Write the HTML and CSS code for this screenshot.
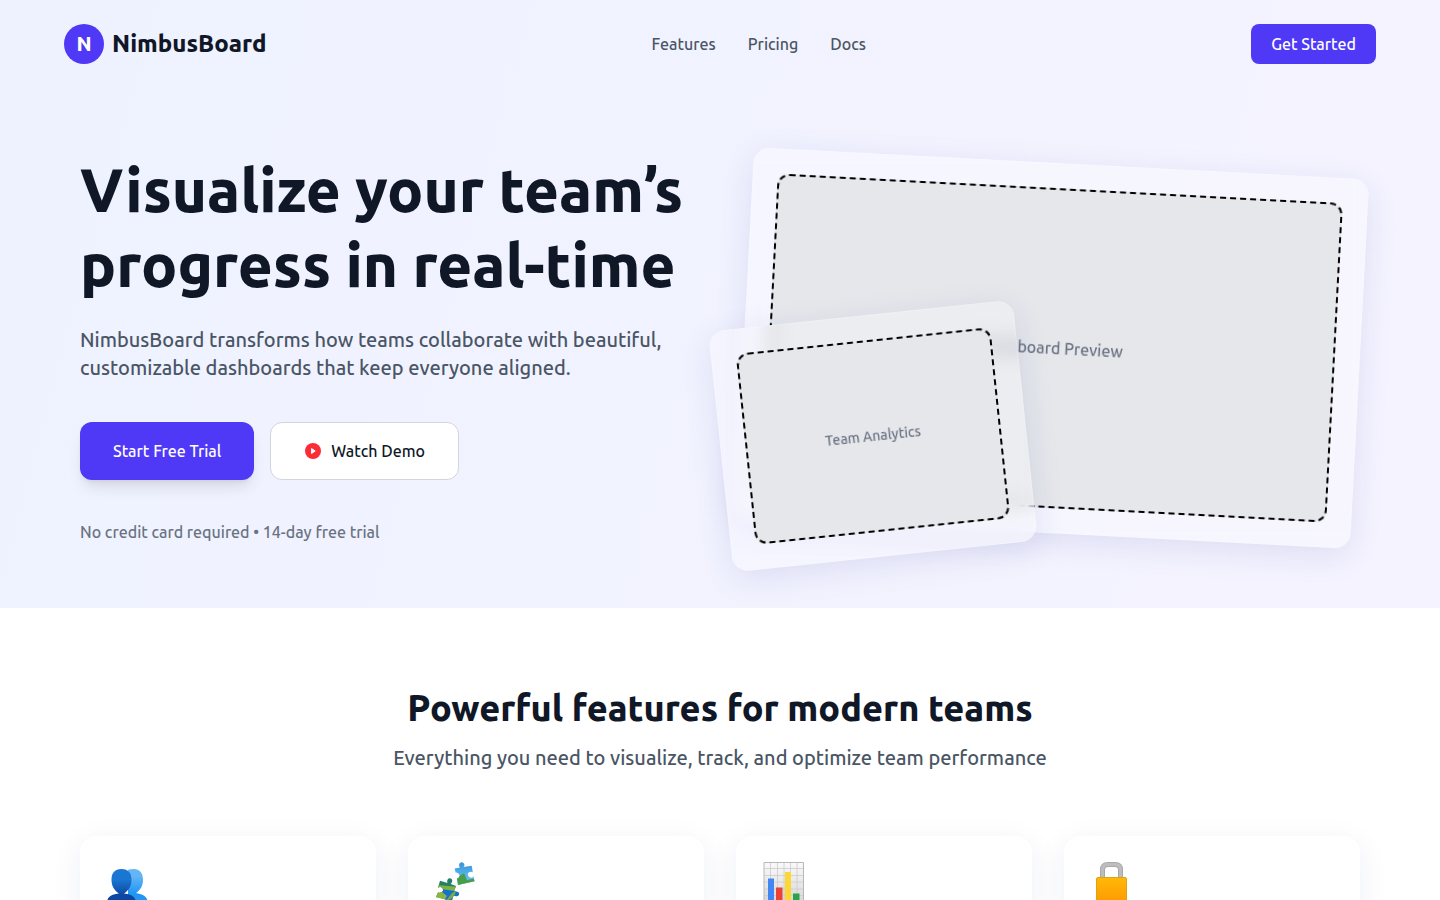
FILE: index.html
```html
<!DOCTYPE html>
<html lang="en">
<head>
<meta charset="utf-8">
<meta name="viewport" content="width=device-width, initial-scale=1">
<title>NimbusBoard</title>
<link rel="stylesheet" href="styles.css">
</head>
<body>
<div class="hero-wrap">
  <header class="topbar">
    <a class="brand" href="#"><span class="brand-mark">N</span><span class="brand-name">NimbusBoard</span></a>
    <nav class="nav">
      <a href="#features">Features</a>
      <a href="#">Pricing</a>
      <a href="#">Docs</a>
    </nav>
    <button class="btn btn-small" type="button">Get Started</button>
  </header>
  <section class="hero">
    <div class="hero-copy">
      <h1>Visualize your team’s progress in real-time</h1>
      <p class="lead">NimbusBoard transforms how teams collaborate with beautiful, customizable dashboards that keep everyone aligned.</p>
      <div class="actions">
        <button class="btn btn-large" type="button">Start Free Trial</button>
        <button class="btn-outline" type="button">
          <svg class="play" viewBox="0 0 16 16" aria-hidden="true"><circle cx="8" cy="8" r="8" fill="#fb2c36"/><path d="M6.6 5.6 10.2 8 6.6 10.4Z" fill="#fff" stroke="#fff" stroke-width="1" stroke-linejoin="round"/></svg>
          Watch Demo
        </button>
      </div>
      <p class="note">No credit card required • 14-day free trial</p>
    </div>
    <div class="previews">
      <div class="glass glass-main"><div class="placeholder placeholder-main">Dashboard Preview</div></div>
      <div class="glass glass-side"><div class="placeholder placeholder-side">Team Analytics</div></div>
    </div>
  </section>
</div>
<section class="features" id="features">
  <h2>Powerful features for modern teams</h2>
  <p class="features-lead">Everything you need to visualize, track, and optimize team performance</p>
  <div class="cards">
    <article class="card">
      <svg class="icon" viewBox="0 0 48 48" role="img" aria-label="People">
        <defs>
          <linearGradient id="dark" x1="0" y1="9" x2="0" y2="44" gradientUnits="userSpaceOnUse"><stop offset=".3" stop-color="#1976d2"/><stop offset=".75" stop-color="#0d47a1"/></linearGradient>
          <linearGradient id="light" x1="0" y1="9" x2="0" y2="44" gradientUnits="userSpaceOnUse"><stop offset=".2" stop-color="#64b5f6"/><stop offset=".7" stop-color="#2196f3"/></linearGradient>
        </defs>
        <path d="M29.500 9C36 9 39 13 39 20C39 27 35 31 32 33C41 34.500 44 38 44 44H24V9.800Q27 9 29.500 9Z" fill="url(#light)"/>
        <path d="M17.500 9C24.500 9 27.500 13 27.500 20C27.500 26.500 24 31 20 33.500C30 34.500 32 38 32 44H3C3 38 5 34.500 15 33.500C11 31 7.500 26.500 7.500 20C7.500 13 10.500 9 17.500 9Z" fill="url(#dark)"/>
      </svg>
    </article>
    <article class="card">
      <svg class="icon" viewBox="0 0 48 48" role="img" aria-label="Puzzle">
        <defs>
          <linearGradient id="sky" x1="0" y1="4" x2="0" y2="20" gradientUnits="userSpaceOnUse"><stop offset="0" stop-color="#3997db"/><stop offset="1" stop-color="#64c2f7"/></linearGradient>
          <clipPath id="upper"><path d="M22.700 8.500 28 7.600Q26 5 28 3Q30 1.500 31.700 3.200Q33.300 5 31.500 7L39.700 5.700 40.800 12.300Q37.500 10.500 35.800 13.500Q35.500 17 38.500 17.500Q40.500 18 41.500 16.500L42.500 21.300 26 25 25 18.500Q27.500 18 27.500 15Q26 12 23.600 12.600Z"/></clipPath>
          <clipPath id="lower"><path d="M8 20.700 15.500 23Q14.500 20 16.500 18.500Q19.500 17.500 20.200 20Q20.500 22.500 18.700 24L24 26 22 31.500Q27 31 27.200 34Q26 37.500 21.500 35.500L19.700 41 4 37 6 32.500Q9.500 33.500 11 31Q11.500 27.500 8.500 27Q6.500 27 6 28Z"/></clipPath>
        </defs>
        <g clip-path="url(#upper)"><path d="M20 0H45V27H20Z" fill="url(#sky)"/><path d="M23 19 32 13 35 20 44 18V27H23Z" fill="#4a9e49"/></g>
        <g clip-path="url(#lower)"><path d="M0 16H30V44H0Z" fill="#237f68"/><path d="M4 25 28 27 20 34 2 33Z" fill="#80b342"/><path d="M9 29 23 31 30 31V44H14Z" fill="#1571cd"/><path d="M3 33 10 32 15 36 11 42H3Z" fill="#8cb442"/><path d="M20 33 24 31 22 37 13 42Z" fill="#79ac3d"/></g>
      </svg>
    </article>
    <article class="card">
      <svg class="icon" viewBox="0 0 48 48" role="img" aria-label="Chart">
        <defs><linearGradient id="sheet" x1="0" y1="2" x2="0" y2="45" gradientUnits="userSpaceOnUse"><stop offset="0" stop-color="#fafafa"/><stop offset="1" stop-color="#d5d5d5"/></linearGradient></defs>
        <path d="M4 2.500H43.500V45H4Z" fill="url(#sheet)" stroke="#b8b8b8"/>
        <path d="M10.500 3V45M17.500 3V45M24 3V45M30.500 3V45M37 3V45M4 8.500H43M4 15.500H43M4 22H43M4 29H43M4 35.500H43" stroke="#cbcbcb" stroke-width=".8"/>
        <path d="M8 18.500H14V44H8Z" fill="#4285f4"/><path d="M16 27.500H22.500V44H16Z" fill="#ea4335"/>
        <path d="M25 12H31V44H25Z" fill="#fdd835"/><path d="M33 33.500H39.500V44H33Z" fill="#29a34c"/>
      </svg>
    </article>
    <article class="card">
      <svg class="icon" viewBox="0 0 48 48" role="img" aria-label="Lock">
        <defs><linearGradient id="gold" x1="0" y1="17" x2="0" y2="46" gradientUnits="userSpaceOnUse"><stop offset="0" stop-color="#ffb908"/><stop offset="1" stop-color="#ff9500"/></linearGradient></defs>
        <path d="M14.500 20V10Q14.500 4.500 20 4.500H27Q32.500 4.500 32.500 10V20" fill="none" stroke="#a3a3a3" stroke-width="5"/>
        <path d="M14.500 20V10Q14.500 4.500 20 4.500H27Q32.500 4.500 32.500 10V20" fill="none" stroke="#bdbdbd" stroke-width="3.400"/>
        <rect x="8.500" y="17.500" width="30" height="28" rx="1.500" fill="url(#gold)" stroke="#d9a514"/>
      </svg>
    </article>
  </div>
</section>
</body>
</html>
```
FILE: styles.css
```css
* { box-sizing: border-box; }
body {
  margin: 0;
  background: #fff;
  color: #101828;
  font-family: Ubuntu, "Noto Sans", sans-serif;
  font-size: 16px;
  font-weight: 500;
  line-height: 24px;
}
h1, h2, p { margin: 0; }
a { color: inherit; text-decoration: none; }
button { font: inherit; cursor: pointer; }
h1, h2, .brand-mark, .brand-name { font-weight: 800; }
.hero-wrap { background: linear-gradient(105deg, #eef2ff, #f5f3ff); overflow: hidden; }
.topbar { display: flex; align-items: center; justify-content: space-between; padding: 24px 64px; }
.brand { display: flex; align-items: center; gap: 8px; }
.brand-mark {
  display: grid; place-items: center; width: 40px; height: 40px; border-radius: 50%;
  background: #4f39f6; color: #fff; font-size: 20px;
}
.brand-name { font-size: 24px; line-height: 32px; }
.nav { display: flex; gap: 32px; color: #4a5565; }
.btn { border: 0; background: #4f39f6; color: #fff; }
.btn-small { padding: 8px 20px; border-radius: 8px; }
.btn-large {
  padding: 17px 33px; border-radius: 12px;
  box-shadow: 0 10px 15px -3px rgba(0, 0, 0, 0.1), 0 4px 6px -4px rgba(0, 0, 0, 0.1);
}
.btn-outline {
  display: flex; align-items: center; gap: 10px; padding: 16px 33px 16px 34px;
  border: 1px solid #d1d5dc; border-radius: 12px; background: #fff; color: #101828;
}
.play { width: 16px; height: 16px; }
.hero {
  display: grid; grid-template-columns: 1fr 1fr; gap: 48px; align-items: center;
  max-width: 1280px; margin: 0 auto; padding: 64px 0;
}
h1 { font-size: 60px; line-height: 75px; }
.lead { margin-top: 24px; font-size: 20px; line-height: 28px; color: #4a5565; }
.actions { display: flex; gap: 16px; margin-top: 40px; }
.note { margin-top: 40px; color: #6a7282; }
.previews { position: relative; }
.glass {
  padding: 24px; border: 1px solid rgba(255, 255, 255, 0.18); border-radius: 16px;
  background: rgba(255, 255, 255, 0.25);
  box-shadow: 0 8px 32px rgba(31, 38, 135, 0.1);
  backdrop-filter: blur(10px);
}
.glass-main { transform: rotate(3deg); }
.glass-side { position: absolute; left: -24px; bottom: -24px; transform: rotate(-6deg); }
.placeholder {
  display: grid; place-items: center; border: 2px dashed #000; border-radius: 12px;
  background: #e5e7eb; color: #6a7282;
}
.placeholder-main { height: 320px; }
.placeholder-side { width: 256px; height: 192px; font-size: 14px; line-height: 20px; }
.features { max-width: 1280px; margin: 0 auto; padding: 80px 0; text-align: center; }
h2 { font-size: 36px; line-height: 40px; }
.features-lead { margin-top: 16px; font-size: 20px; line-height: 28px; color: #4a5565; }
.cards { display: grid; grid-template-columns: repeat(4, 1fr); gap: 32px; margin-top: 64px; text-align: left; }
.card {
  min-height: 200px; padding: 24px; border-radius: 16px; background: #fff;
  box-shadow: 0 8px 32px rgba(31, 38, 135, 0.07);
}
.icon { display: block; width: 48px; height: 48px; }
```
